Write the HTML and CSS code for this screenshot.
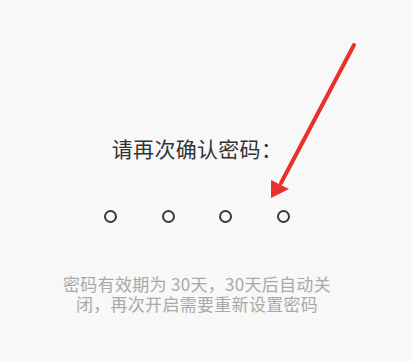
FILE: index.html
```html
<!DOCTYPE html>
<html lang="zh">
<head>
<meta charset="utf-8">
<link rel="stylesheet" href="styles.css">
</head>
<body>
<div class="screen">
  <div class="title">请再次确认密码：</div>
  <div class="dots">
    <span class="dot"></span>
    <span class="dot"></span>
    <span class="dot"></span>
    <span class="dot"></span>
  </div>
  <p class="hint">密码有效期为 30天，30天后自动关<br>闭，再次开启需要重新设置密码</p>
  <svg class="arrow" width="412" height="361" viewBox="0 0 412 361">
    <line x1="354" y1="45" x2="281" y2="183" stroke="#e8302c" stroke-width="4" stroke-linecap="round"/>
    <polygon points="271,198 271,180 289,189" fill="#e8302c"/>
  </svg>
</div>
</body>
</html>
```
FILE: styles.css
```css
html, body {
  margin: 0;
  padding: 0;
  background: #f8f8f8;
}
.screen {
  position: relative;
  width: 412px;
  height: 361px;
  box-sizing: border-box;
  padding-top: 134px;
  padding-right: 18px;
  display: flex;
  flex-direction: column;
  align-items: center;
  font-family: "Noto Sans CJK SC", "Noto Sans", sans-serif;
  overflow: hidden;
}
.title {
  font-size: 21px;
  line-height: 29px;
  color: #333;
  letter-spacing: 0.3px;
}
.dots {
  margin-top: 47px;
  display: flex;
  gap: 44.5px;
}
.dot {
  width: 13px;
  height: 13px;
  box-sizing: border-box;
  border: 2px solid #3a3a3a;
  border-radius: 50%;
}
.hint {
  margin: 51px 0 0;
  font-size: 17px;
  line-height: 20px;
  letter-spacing: 0.3px;
  color: #a9a9a9;
  text-align: center;
}
.arrow {
  position: absolute;
  left: 0;
  top: 0;
}
```
